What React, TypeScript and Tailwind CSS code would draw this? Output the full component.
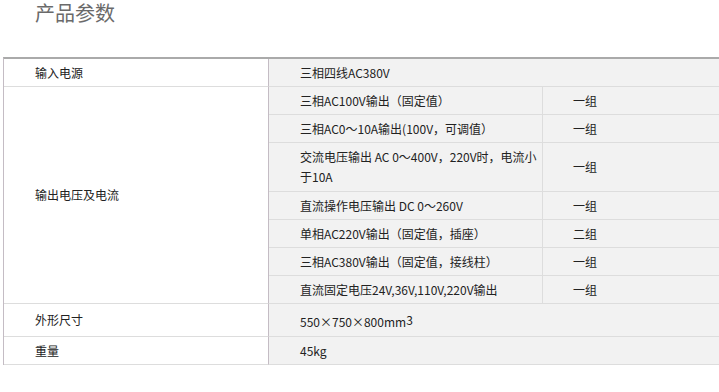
import React from "react";

type SubRow = { spec: React.ReactNode; qty: string; tall?: boolean };

const outputs: SubRow[] = [
  { spec: "三相AC100V输出（固定值）", qty: "一组" },
  { spec: "三相AC0～10A输出(100V，可调值）", qty: "一组" },
  {
    spec: (
      <>
        交流电压输出 AC 0～400V，220V时，电流小
        <br />
        于10A
      </>
    ),
    qty: "一组",
    tall: true,
  },
  { spec: "直流操作电压输出 DC 0～260V", qty: "一组" },
  { spec: "单相AC220V输出（固定值，插座）", qty: "二组" },
  { spec: "三相AC380V输出（固定值，接线柱）", qty: "一组" },
  { spec: "直流固定电压24V,36V,110V,220V输出", qty: "一组" },
];

const font = "font-['Noto_Sans_CJK_SC','Noto_Sans',sans-serif]";

export default function App() {
  return (
    <div className={`w-[719px] h-[392px] bg-white overflow-hidden ${font} text-[12px] text-[#222]`}>
      <h1 className="pt-[2px] pl-[35px] text-[20px] leading-[22px] text-[#6a6a6a] font-normal">产品参数</h1>

      <div className="ml-[3px] mt-[33px] w-[716px] border-t-2 border-t-[#aaa] border-l border-l-[#c4bcc4]">
        {/* input power */}
        <div className="flex h-[28px]">
          <div className="w-[265px] shrink-0 flex items-center pl-[31px] border-r border-r-[#c4bcc4] border-b border-b-[#ddd]">
            输入电源
          </div>
          <div className="flex-1 flex items-center pl-[31px] bg-[#f2f2f2] border-b border-b-[#ddd]">
            三相四线AC380V
          </div>
        </div>

        {/* outputs */}
        <div className="flex">
          <div className="w-[265px] shrink-0 flex items-center pl-[31px] border-r border-r-[#c4bcc4] border-b border-b-[#ddd]">
            输出电压及电流
          </div>
          <div className="flex-1 flex flex-col bg-[#f2f2f2]">
            {outputs.map((r, i) => (
              <div key={i} className={`flex border-b border-b-[#ddd] ${r.tall ? "h-[49px]" : "h-[28px]"}`}>
                <div className="w-[274px] shrink-0 flex items-center pl-[31px] leading-[20px] whitespace-nowrap border-r border-r-[#ddd]">
                  <div>{r.spec}</div>
                </div>
                <div className="flex-1 flex items-center pl-[30px]">{r.qty}</div>
              </div>
            ))}
          </div>
        </div>

        {/* dimensions */}
        <div className="flex h-[33px]">
          <div className="w-[265px] shrink-0 flex items-center pl-[31px] border-r border-r-[#c4bcc4] border-b border-b-[#ddd]">
            外形尺寸
          </div>
          <div className="flex-1 flex items-center pl-[31px] pt-[4px] bg-[#f2f2f2] border-b border-b-[#ddd]">
            <span>
              550×750×800mm<sup className="text-[12px] relative -top-[2px]">3</sup>
            </span>
          </div>
        </div>

        {/* weight */}
        <div className="flex h-[28px]">
          <div className="w-[265px] shrink-0 flex items-center pl-[31px] border-r border-r-[#c4bcc4] border-b border-b-[#ddd]">
            重量
          </div>
          <div className="flex-1 flex items-center pl-[31px] bg-[#f2f2f2] border-b border-b-[#ddd]">
            45kg
          </div>
        </div>
      </div>
    </div>
  );
}
